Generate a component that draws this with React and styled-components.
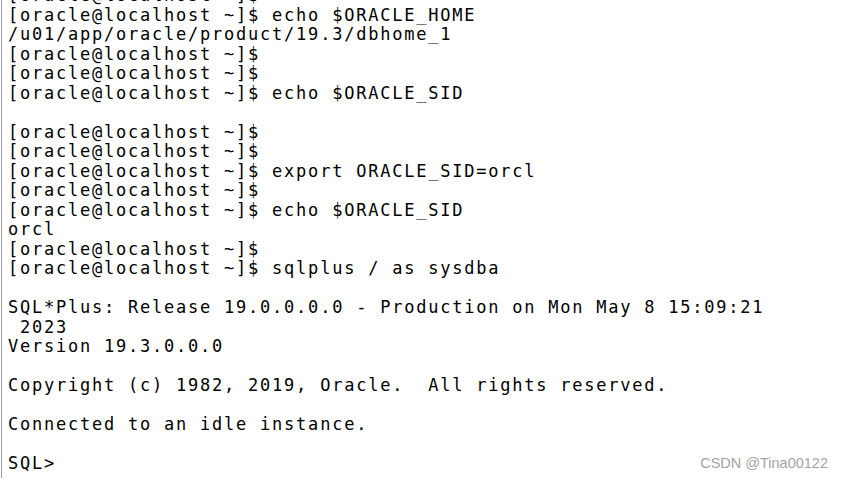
import React from 'react';
import styled, { createGlobalStyle } from 'styled-components';

const GlobalStyle = createGlobalStyle`
    html, body {
        margin: 0;
        padding: 0;
        background: #ffffff;
    }
`;

const Screen = styled.div`
    position: relative;
    width: 844px;
    height: 478px;
    overflow: hidden;
    background: #ffffff;
    display: flex;
`;

const LeftEdge = styled.div`
    width: 1px;
    margin-left: 1px;
    background: #a3a3a3;
    flex-shrink: 0;
`;

const Terminal = styled.pre`
    margin: -14px 0 0 6px;
    font-family: "DejaVu Sans Mono", "Liberation Mono", monospace;
    font-size: 17px;
    letter-spacing: 1.77px;
    line-height: 19.5px;
    color: #000000;
    white-space: pre;
`;

const Line = styled.div`
    height: 19.5px;
`;

const Watermark = styled.span`
    position: absolute;
    right: 16px;
    bottom: 7px;
    font-family: "Liberation Sans", Arial, sans-serif;
    font-size: 14.5px;
    color: #a3a3a3;
`;

const prompt = '[oracle@localhost ~]$';

const lines = [
    prompt,
    `${prompt} echo $ORACLE_HOME`,
    '/u01/app/oracle/product/19.3/dbhome_1',
    prompt,
    prompt,
    `${prompt} echo $ORACLE_SID`,
    '',
    prompt,
    prompt,
    `${prompt} export ORACLE_SID=orcl`,
    prompt,
    `${prompt} echo $ORACLE_SID`,
    'orcl',
    prompt,
    `${prompt} sqlplus / as sysdba`,
    '',
    'SQL*Plus: Release 19.0.0.0.0 - Production on Mon May 8 15:09:21',
    ' 2023',
    'Version 19.3.0.0.0',
    '',
    'Copyright (c) 1982, 2019, Oracle.  All rights reserved.',
    '',
    'Connected to an idle instance.',
    '',
    'SQL>',
];

const App = () => (
    <>
        <GlobalStyle />
        <Screen>
            <LeftEdge />
            <Terminal>
                {lines.map((text, i) => (
                    <Line key={i}>{text}</Line>
                ))}
            </Terminal>
            <Watermark>CSDN @Tina00122</Watermark>
        </Screen>
    </>
);

export default App;
